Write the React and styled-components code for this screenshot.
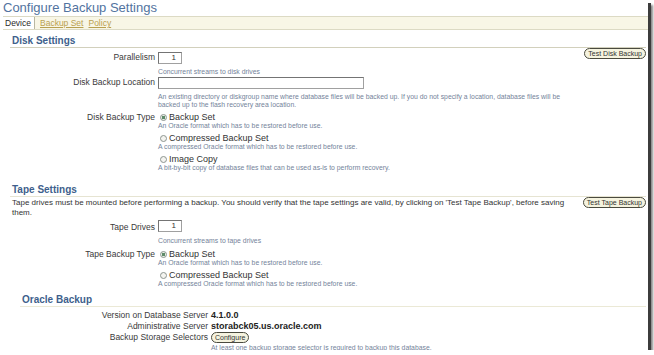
import React from 'react';
import styled, {createGlobalStyle} from 'styled-components';

const GlobalStyle = createGlobalStyle`
  html, body {
    margin: 0;
    padding: 0;
    background: #ffffff;
  }
  body {
    font-family: "Liberation Sans", Arial, sans-serif;
  }
`

let Frame = styled.div`
  width: 648px;
  height: 350px;
  background: #ffffff;
  box-shadow: 3px 3px 0 #3c3c3c, 5px 5px 2px #8a8a8a;
  overflow: hidden;
`

let Title = styled.h1`
  margin: 0;
  padding-left: 3px;
  height: 16px;
  font-size: 13px;
  line-height: 15px;
  font-weight: normal;
  color: #5273a0;
`

let TabBar = styled.div`
  display: flex;
  align-items: center;
  height: 12px;
  margin-left: 3px;
  border-top: 1px solid #dcdac4;
  border-bottom: 1px solid #dcdac4;
  background: #f8f6e6;
  font-size: 8.5px;
`

let ActiveTab = styled.span`
  display: flex;
  align-items: center;
  height: 100%;
  padding: 0 3px 0 2px;
  background: #ffffff;
  border-right: 1px solid #b9b7a2;
  color: #2a2a2a;
`

let TabLink = styled.a`
  margin-left: 5px;
  color: #b8a050;
  text-decoration: underline;
`

let Section = styled.section`
  padding-left: ${props => props.indent}px;
  padding-right: 2px;
  margin-top: ${props => props.top}px;
`

let SectionHeader = styled.h2`
  margin: 0;
  height: 12px;
  padding-left: 2px;
  font-size: 10px;
  line-height: 11px;
  font-weight: bold;
  color: #3e5f8c;
  border-bottom: 1px solid ${props => props.line};
`

let SectionBody = styled.div`
  display: flex;
  justify-content: space-between;
  align-items: flex-start;
  gap: 6px;
`

let FieldsCol = styled.div`
  flex: 1;
  padding-top: ${props => props.top || 0}px;
`

let Field = styled.div`
  display: grid;
  grid-template-columns: ${props => props.labelWidth}px 1fr;
  column-gap: 3px;
  margin-top: ${props => props.top || 0}px;
`

let Label = styled.div`
  text-align: right;
  font-size: 8.5px;
  line-height: ${props => props.lh}px;
  color: #3a3a3a;
  white-space: nowrap;
`

let Control = styled.div`
  display: flex;
  flex-direction: column;
  align-items: flex-start;
`

let InputLine = styled.div`
  height: 13px;
  display: flex;
  align-items: center;
`

let TextBox = styled.div`
  box-sizing: border-box;
  width: ${props => props.w}px;
  height: 12px;
  border: 1px solid #a0a0a0;
  border-top-color: #747474;
  border-left-color: #747474;
  font-size: 8px;
  line-height: 10px;
  text-align: right;
  padding-right: 5px;
  color: #333;
`

let Hint = styled.div`
  margin-top: ${props => props.top || 0}px;
  font-size: 6.85px;
  line-height: 8px;
  color: #74839a;
  white-space: nowrap;
`

let Option = styled.div`
  margin-top: ${props => props.top}px;
`

let RadioLine = styled.div`
  display: flex;
  align-items: center;
  height: 10px;
  padding-left: 2px;
  font-size: 9px;
  color: #333;
`

let RadioDot = styled.span`
  box-sizing: border-box;
  width: 7px;
  height: 7px;
  margin-right: 2px;
  border-radius: 50%;
  border: 1px solid #8d9590;
  background: ${props => (props.checked ? 'radial-gradient(circle, #5f8a6a 0 1.6px, #e8efe6 2px)' : '#f4f4f0')};
`

let PillButton = styled.button`
  display: block;
  flex: none;
  height: 11px;
  padding: 0 3px;
  margin: 0;
  border: 1px solid #4a4a3e;
  border-radius: 6px;
  background: #f5f3df;
  font-family: "Liberation Sans", Arial, sans-serif;
  font-size: 7px;
  line-height: 9px;
  color: #333;
`

let Paragraph = styled.p`
  margin: 1px 0 0;
  padding-left: 2px;
  font-size: 8px;
  line-height: 10px;
  color: #333;
`

let Value = styled.div`
  font-size: 9px;
  font-weight: bold;
  line-height: 11px;
  color: #222;
`

const Radio = ({checked, label, hint, top}) => (
    <Option top={top}>
        <RadioLine><RadioDot checked={checked}/>{label}</RadioLine>
        <Hint>{hint}</Hint>
    </Option>
)

const App = () => {
    return (
        <Frame>
            <GlobalStyle/>
            <Title>Configure Backup Settings</Title>
            <TabBar>
                <ActiveTab>Device</ActiveTab>
                <TabLink>Backup Set</TabLink>
                <TabLink>Policy</TabLink>
            </TabBar>

            <Section indent={10} top={5}>
                <SectionHeader line="#d2d0bc">Disk Settings</SectionHeader>
                <SectionBody>
                    <FieldsCol top={3}>
                        <Field labelWidth={145}>
                            <Label lh={13}>Parallelism</Label>
                            <Control>
                                <InputLine><TextBox w={24}>1</TextBox></InputLine>
                                <Hint top={4}>Concurrent streams to disk drives</Hint>
                            </Control>
                        </Field>
                        <Field labelWidth={145}>
                            <Label lh={13}>Disk Backup Location</Label>
                            <Control>
                                <InputLine><TextBox w={206}/></InputLine>
                                <Hint top={4}>
                                    An existing directory or diskgroup name where database files will be backed up. If you do not specify a location, database files will be
                                    <br/>backed up to the flash recovery area location.
                                </Hint>
                            </Control>
                        </Field>
                        <Field labelWidth={145}>
                            <Label lh={16}>Disk Backup Type</Label>
                            <Control>
                                <Radio checked top={3} label="Backup Set"
                                       hint="An Oracle format which has to be restored before use."/>
                                <Radio top={3} label="Compressed Backup Set"
                                       hint="A compressed Oracle format which has to be restored before use."/>
                                <Radio top={3} label="Image Copy"
                                       hint="A bit-by-bit copy of database files that can be used as-is to perform recovery."/>
                            </Control>
                        </Field>
                    </FieldsCol>
                    <PillButton>Test Disk Backup</PillButton>
                </SectionBody>
            </Section>

            <Section indent={10} top={12}>
                <SectionHeader line="#e6e4d2">Tape Settings</SectionHeader>
                <SectionBody>
                    <FieldsCol>
                        <Paragraph>
                            Tape drives must be mounted before performing a backup. You should verify that the tape settings are valid, by clicking on 'Test Tape Backup', before saving them.
                        </Paragraph>
                        <Field labelWidth={145} top={1}>
                            <Label lh={16}>Tape Drives</Label>
                            <Control>
                                <InputLine><TextBox w={24}>1</TextBox></InputLine>
                                <Hint top={5}>Concurrent streams to tape drives</Hint>
                            </Control>
                        </Field>
                        <Field labelWidth={145}>
                            <Label lh={18}>Tape Backup Type</Label>
                            <Control>
                                <Radio checked top={4} label="Backup Set"
                                       hint="An Oracle format which has to be restored before use."/>
                                <Radio top={3} label="Compressed Backup Set"
                                       hint="A compressed Oracle format which has to be restored before use."/>
                            </Control>
                        </Field>
                    </FieldsCol>
                    <PillButton>Test Tape Backup</PillButton>
                </SectionBody>
            </Section>

            <Section indent={20} top={6}>
                <SectionHeader line="#ebe9d6">Oracle Backup</SectionHeader>
                <FieldsCol top={3}>
                    <Field labelWidth={188}>
                        <Label lh={11}>Version on Database Server</Label>
                        <Value>4.1.0.0</Value>
                    </Field>
                    <Field labelWidth={188}>
                        <Label lh={11}>Administrative Server</Label>
                        <Value>storabck05.us.oracle.com</Value>
                    </Field>
                    <Field labelWidth={188}>
                        <Label lh={11}>Backup Storage Selectors</Label>
                        <Control>
                            <PillButton>Configure</PillButton>
                            <Hint top={1}>At least one backup storage selector is required to backup this database.</Hint>
                        </Control>
                    </Field>
                </FieldsCol>
            </Section>
        </Frame>
    )
}

export default App;
